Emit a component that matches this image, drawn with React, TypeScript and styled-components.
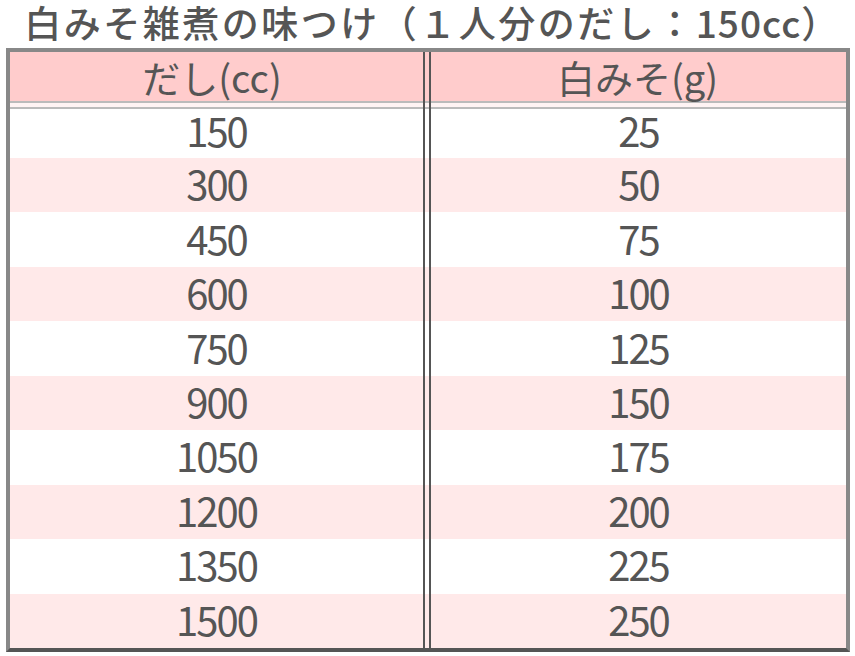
import styled, { createGlobalStyle } from "styled-components";

const rows: [number, number][] = [
  [150, 25],
  [300, 50],
  [450, 75],
  [600, 100],
  [750, 125],
  [900, 150],
  [1050, 175],
  [1200, 200],
  [1350, 225],
  [1500, 250],
];

const GlobalStyle = createGlobalStyle`
  html, body {
    margin: 0;
    padding: 0;
    background: #fff;
  }
  body {
    font-family: "Noto Sans CJK JP", "Noto Sans", sans-serif;
    color: #555;
  }
`;

const App = () => {
  return (
    <Page>
      <GlobalStyle />
      <Title>
        白みそ雑煮の味つけ（１人分のだし：<Half>150cc</Half>）
      </Title>
      <Table>
        <colgroup>
          <col style={{ width: 413 }} />
          <col style={{ width: 8 }} />
          <col style={{ width: 415 }} />
        </colgroup>
        <thead>
          <HeadRow>
            <HeadCell $nudge={9}>だし(cc)</HeadCell>
            <Divider as="th" $head />
            <HeadCell $nudge={2}>白みそ(g)</HeadCell>
          </HeadRow>
        </thead>
        <tbody>
          {rows.map(([dashi, miso], i) => (
            <Row key={dashi} $stripe={i % 2 === 1} $first={i === 0}>
              <Cell>{dashi}</Cell>
              <Divider />
              <Cell>{miso}</Cell>
            </Row>
          ))}
        </tbody>
      </Table>
    </Page>
  );
};

const Page = styled.div`
  width: 855px;
  height: 656px;
  overflow: hidden;
`;

const Title = styled.h1`
  margin: 0 0 4px;
  padding-left: 10px;
  font-size: 37px;
  font-weight: 500;
  line-height: 44px;
  letter-spacing: 2.5px;
  text-align: center;
  white-space: nowrap;
  color: #555;
`;

const Half = styled.span`
  letter-spacing: 1px;
`;

const Table = styled.table`
  box-sizing: border-box;
  width: 844px;
  margin-left: 6px;
  border-collapse: separate;
  border-spacing: 0;
  table-layout: fixed;
  border: 4px solid #888;
  border-bottom-color: #555;
`;

const HeadRow = styled.tr`
  height: 57px;
`;

const headBg =
  "linear-gradient(to top, #bbb 0 2px, #fff4f4 2px 6px, #bbb 6px 8px, #ffcccc 8px)";

const HeadCell = styled.th<{ $nudge?: number }>`
  padding: 0 ${(p) => p.$nudge ?? 0}px 8px 0;
  font-size: 38px;
  font-weight: 400;
  line-height: 49px;
  text-align: center;
  color: #555;
  background: ${headBg};
`;

const Divider = styled.td<{ $head?: boolean }>`
  padding: 0;
  border-left: 2px solid #555;
  border-right: 2px solid #555;
  background: ${(p) => (p.$head ? headBg : "transparent")};
`;

const Row = styled.tr<{ $stripe: boolean; $first: boolean }>`
  height: ${(p) => (p.$first ? "49px" : "54.44px")};
  background: ${(p) => (p.$stripe ? "#ffe9e9" : "#fff")};

  & > td:not(:nth-child(2)) {
    padding-bottom: ${(p) => (p.$first ? "8px" : "4px")};
  }
`;

const Cell = styled.td`
  padding: 0;
  font-size: 40px;
  font-weight: 400;
  line-height: 1;
  letter-spacing: -2px;
  text-align: center;
  color: #555;
`;

export default App;
